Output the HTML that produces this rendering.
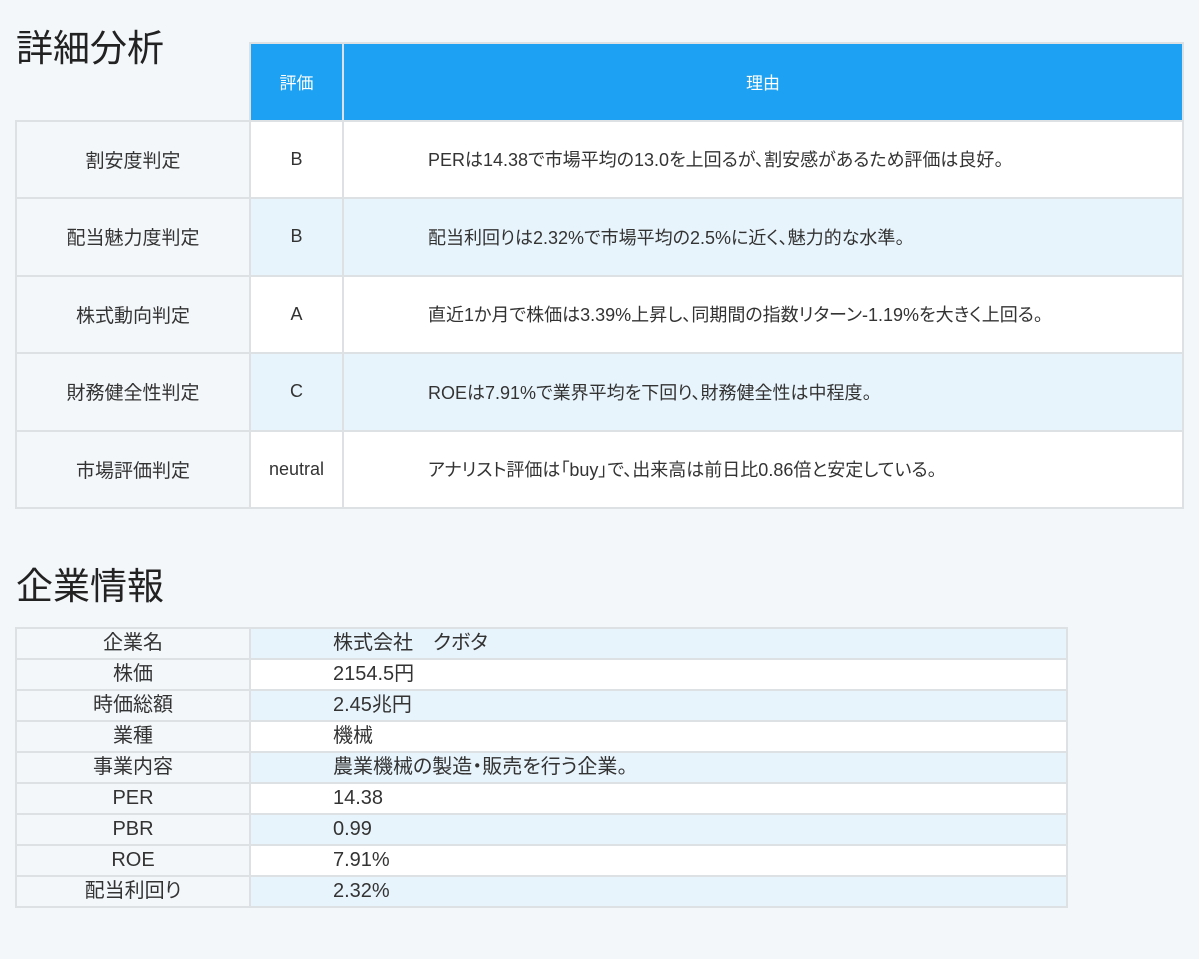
<!DOCTYPE html>
<html><head><meta charset="utf-8"><style>
*{margin:0;padding:0;box-sizing:border-box}
body{width:1199px;height:959px;background:#f3f7fa;font-family:"Liberation Sans","Noto Sans CJK JP",sans-serif;color:#333;position:relative;overflow:hidden;font-feature-settings:"palt"}
h2{position:absolute;left:16px;font-weight:400;font-size:37px;color:#222;line-height:1}
table{position:absolute;border-collapse:collapse}
td,th{border:2px solid #dde1e4}
#t1{left:15px;top:42px;width:1169px}
#t1 td,#t1 th{height:77.5px;font-size:18px;font-weight:400;vertical-align:middle}
#t1 th{background:#1da1f2;color:#fff;border-color:#dde1e4;font-size:17px}
#t1 td.l{background:#f3f7fa;text-align:center;width:234px;font-size:19px}
#t1 td.e{text-align:center;width:93px;font-size:18px}
#t1 td.r{padding-left:84px;font-size:18px}
#t1 tr.w td.e,#t1 tr.w td.r{background:#fff}
#t1 tr.b td.e,#t1 tr.b td.r{background:#e8f4fc}
#t2{left:15px;top:627px;width:1053px}
#t2 td{height:31px;font-size:20px;line-height:27px;padding:0}
#t2 td.l{background:#f3f7fa;text-align:center;width:234px}
#t2 td.v{padding-left:82px}
#t2 tr.b td.v{background:#e8f4fc}
#t2 tr.w td.v{background:#fff}
</style></head><body>
<h2 style="top:30px">詳細分析</h2>
<table id="t1">
<tr><td style="border:none;background:transparent;border-bottom:2px solid #dde1e4"></td><th style="width:93px">評価</th><th>理由</th></tr>
<tr class="w"><td class="l">割安度判定</td><td class="e">B</td><td class="r">PERは14.38で市場平均の13.0を上回るが、割安感があるため評価は良好。</td></tr>
<tr class="b"><td class="l">配当魅力度判定</td><td class="e">B</td><td class="r">配当利回りは2.32%で市場平均の2.5%に近く、魅力的な水準。</td></tr>
<tr class="w"><td class="l">株式動向判定</td><td class="e">A</td><td class="r">直近1か月で株価は3.39%上昇し、同期間の指数リターン-1.19%を大きく上回る。</td></tr>
<tr class="b"><td class="l">財務健全性判定</td><td class="e">C</td><td class="r">ROEは7.91%で業界平均を下回り、財務健全性は中程度。</td></tr>
<tr class="w"><td class="l">市場評価判定</td><td class="e">neutral</td><td class="r">アナリスト評価は「buy」で、出来高は前日比0.86倍と安定している。</td></tr>
</table>
<h2 style="top:568px">企業情報</h2>
<table id="t2">
<tr class="b"><td class="l">企業名</td><td class="v">株式会社　クボタ</td></tr>
<tr class="w"><td class="l">株価</td><td class="v">2154.5円</td></tr>
<tr class="b"><td class="l">時価総額</td><td class="v">2.45兆円</td></tr>
<tr class="w"><td class="l">業種</td><td class="v">機械</td></tr>
<tr class="b"><td class="l">事業内容</td><td class="v">農業機械の製造・販売を行う企業。</td></tr>
<tr class="w"><td class="l">PER</td><td class="v">14.38</td></tr>
<tr class="b"><td class="l">PBR</td><td class="v">0.99</td></tr>
<tr class="w"><td class="l">ROE</td><td class="v">7.91%</td></tr>
<tr class="b"><td class="l">配当利回り</td><td class="v">2.32%</td></tr>
</table>
</body></html>
